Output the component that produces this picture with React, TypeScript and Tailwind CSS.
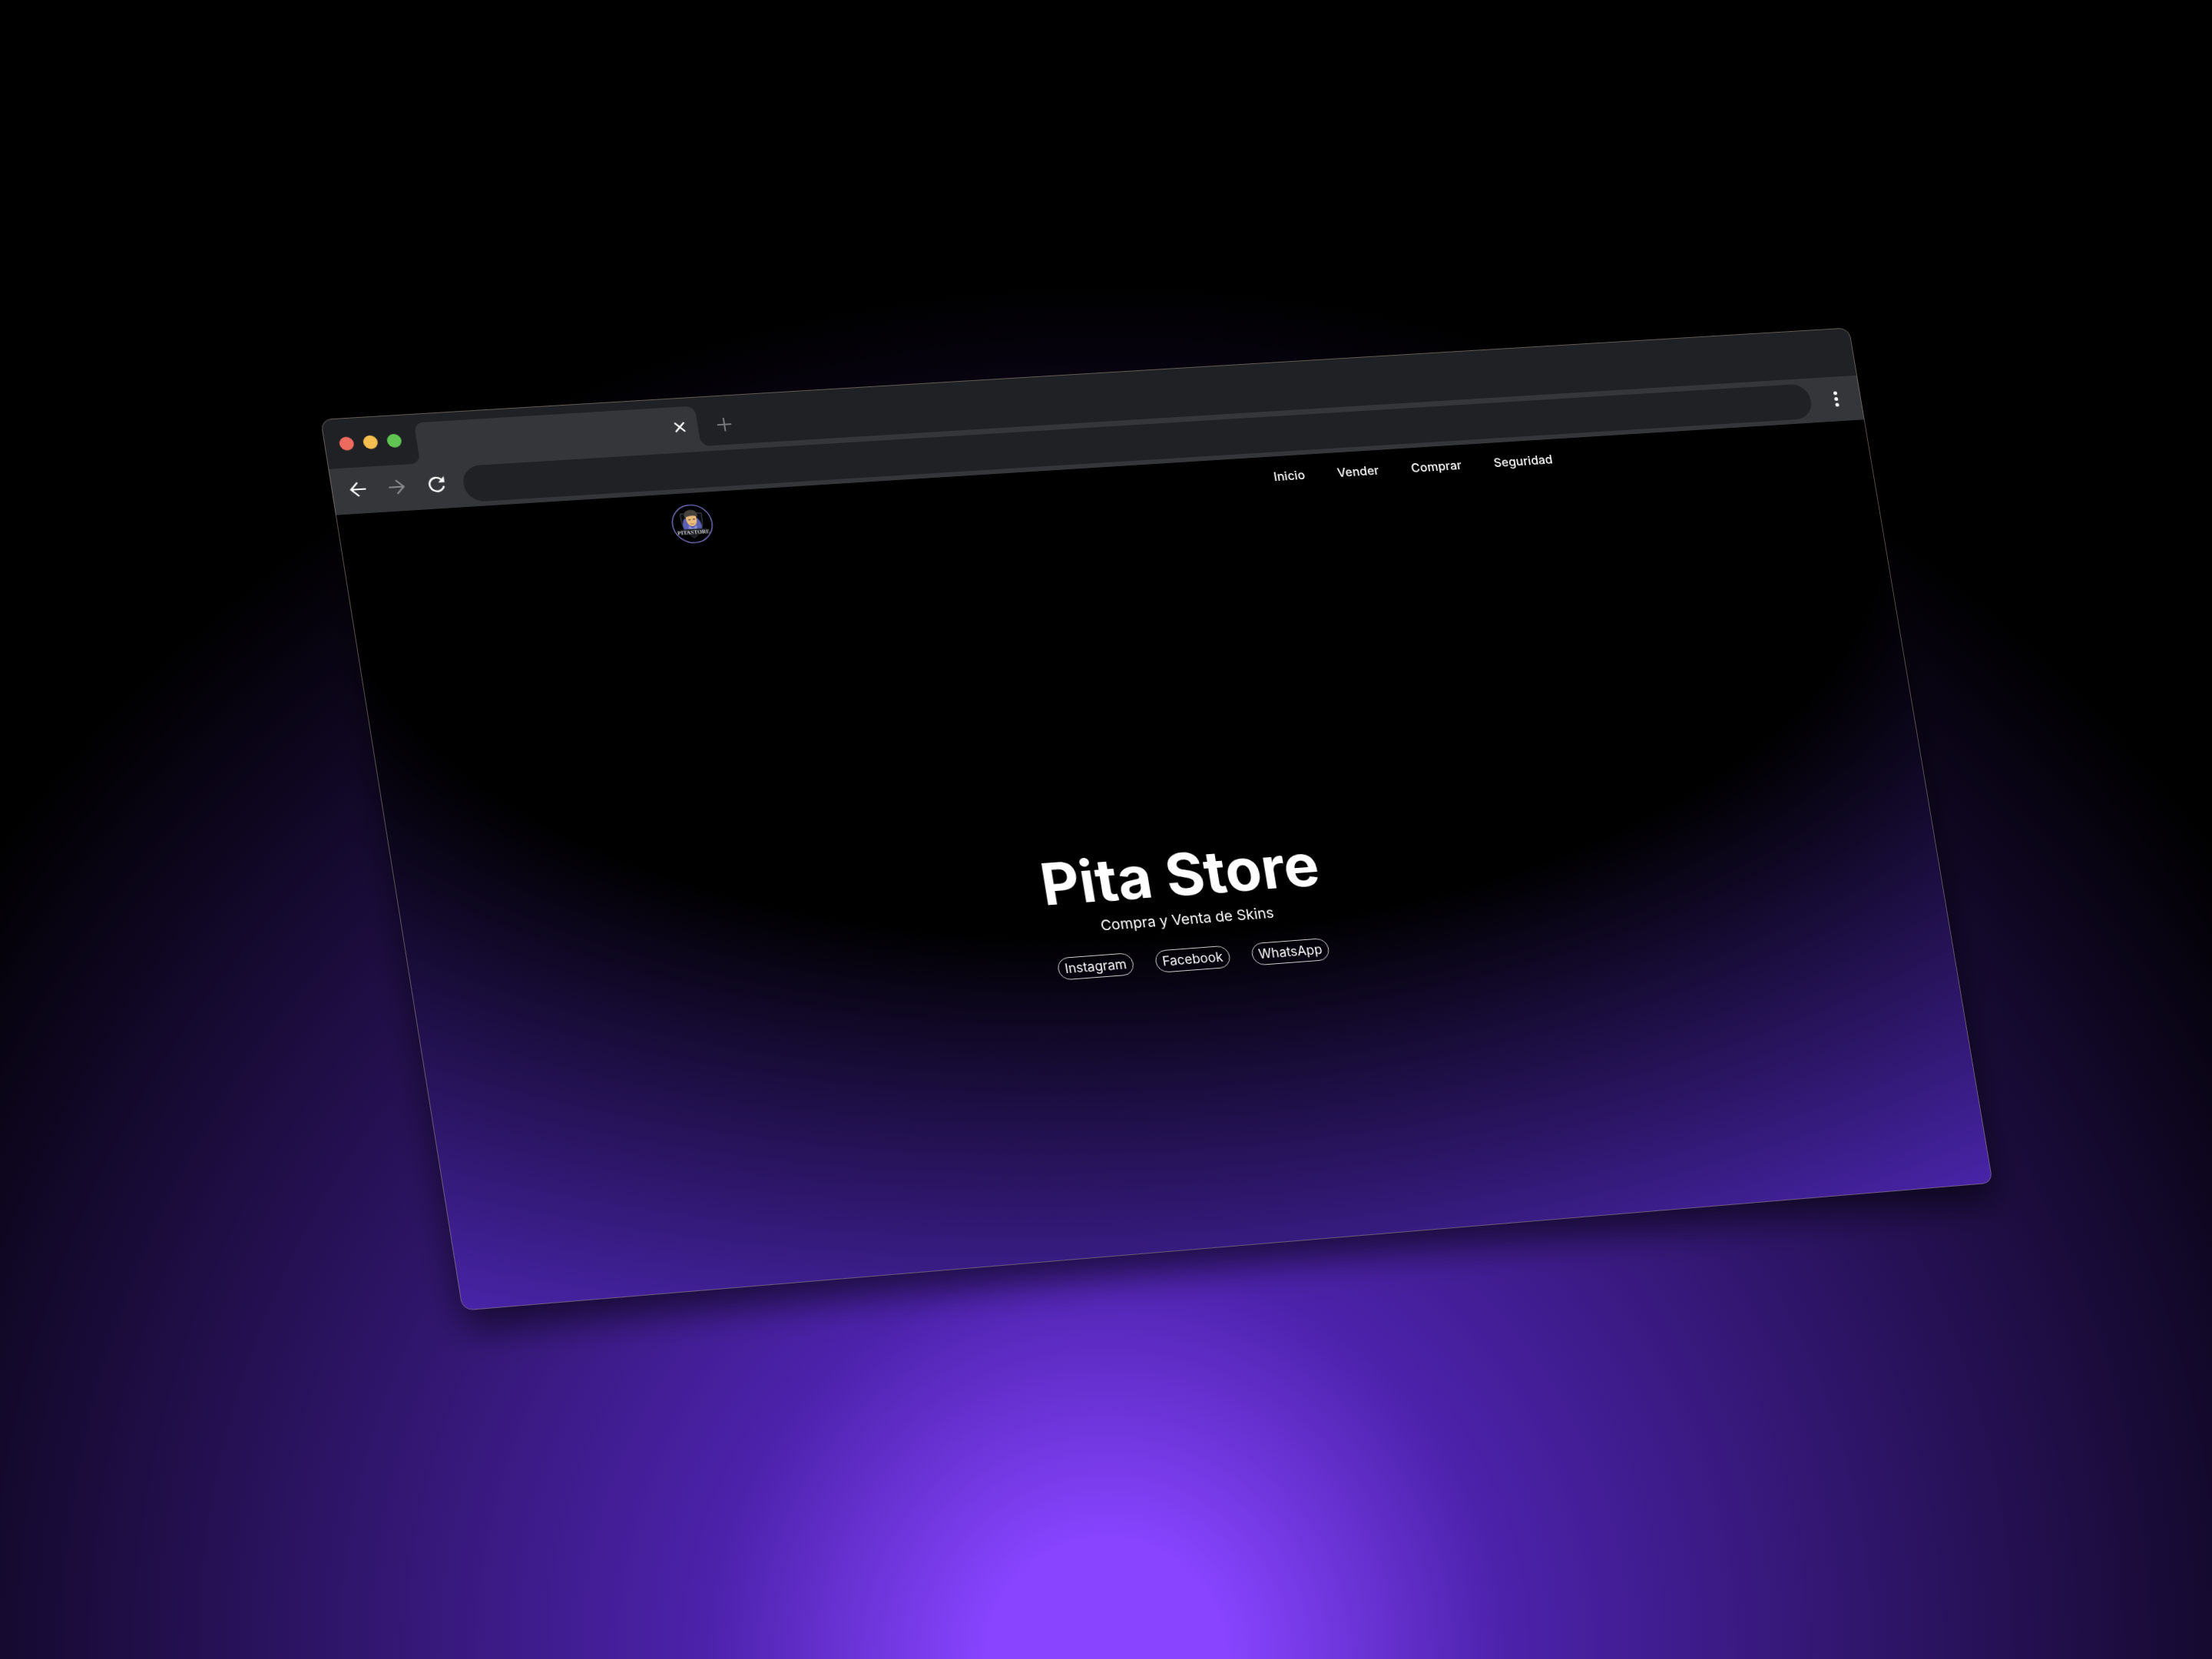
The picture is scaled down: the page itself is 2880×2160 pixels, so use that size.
import { useLayoutEffect, useRef, useState } from "react";
import type { CSSProperties, ReactNode } from "react";

type Point = [number, number];

/* Corners of the tilted window, as fractions of its untilted box. */
const CORNERS: Point[] = [
  [-0.0115, 0.0459],
  [0.9836, -0.0557],
  [1.0773, 0.8914],
  [0.081, 1.0329],
];

/* matrix3d that carries a w × h box onto a quadrilateral. */
function tilt(w: number, h: number): string {
  const [[x0, y0], [x1, y1], [x2, y2], [x3, y3]] = CORNERS.map(([x, y]) => [x * w, y * h]);
  const dx1 = x1 - x2;
  const dx2 = x3 - x2;
  const dy1 = y1 - y2;
  const dy2 = y3 - y2;
  const sx = x0 - x1 + x2 - x3;
  const sy = y0 - y1 + y2 - y3;
  const den = dx1 * dy2 - dx2 * dy1;
  const g = (sx * dy2 - dx2 * sy) / den;
  const k = (dx1 * sy - sx * dy1) / den;
  const a = (x1 - x0 + g * x1) / w;
  const b = (x3 - x0 + k * x3) / h;
  const d = (y1 - y0 + g * y1) / w;
  const e = (y3 - y0 + k * y3) / h;
  return `matrix3d(${[a, d, 0, g / w, b, e, 0, k / h, 0, 0, 1, 0, x0, y0, 0, 1].join(",")})`;
}

function Tilted({ children }: { children: ReactNode }) {
  const ref = useRef<HTMLDivElement>(null);
  const [style, setStyle] = useState<CSSProperties>({});
  useLayoutEffect(() => {
    const el = ref.current;
    if (!el) return;
    const update = () => setStyle({ transform: tilt(el.offsetWidth, el.offsetHeight) });
    update();
    const observer = new ResizeObserver(update);
    observer.observe(el);
    return () => observer.disconnect();
  }, []);
  return (
    <div
      ref={ref}
      style={style}
      className="relative flex aspect-[2000/1176] w-full origin-top-left flex-col overflow-hidden rounded-[14px] bg-black shadow-[0_24px_48px_rgba(0,0,0,0.6)]"
    >
      {children}
      <div className="pointer-events-none absolute inset-0 rounded-[14px] border border-[#8f8378]/60" />
    </div>
  );
}

function TabStrip() {
  return (
    <div className="flex h-[66px] items-end bg-[#202124]">
      <div className="flex h-full w-[116px] items-center gap-3 pt-[2px] pl-[19px]">
        <button aria-label="Close window" className="size-[18px] rounded-full bg-[#ed6a5e]" />
        <button aria-label="Minimize window" className="size-[18px] rounded-full bg-[#f5bf4f]" />
        <button aria-label="Zoom window" className="size-[18px] rounded-full bg-[#61c554]" />
      </div>
      <div className="relative flex h-[54px] w-[357px] items-center justify-end rounded-t-[12px] bg-[#35363a] pr-4">
        <svg viewBox="0 0 12 12" className="absolute bottom-0 -left-3 size-3" aria-hidden="true">
          <path d="M12 0v12H0A12 12 0 0 0 12 0Z" fill="#35363a" />
        </svg>
        <svg viewBox="0 0 12 12" className="absolute -right-3 bottom-0 size-3" aria-hidden="true">
          <path d="M0 0v12h12A12 12 0 0 1 0 0Z" fill="#35363a" />
        </svg>
        <button aria-label="Close tab">
          <svg viewBox="0 0 14 14" className="size-[14px]" fill="none" stroke="#fff" strokeWidth="2.2">
            <path d="M1 1l12 12M13 1L1 13" />
          </svg>
        </button>
      </div>
      <button aria-label="New tab" className="flex h-[54px] items-center pl-[25px]">
        <svg viewBox="0 0 18 18" className="size-[18px]" fill="none" stroke="#76777a" strokeWidth="2">
          <path d="M9 0v18M0 9h18" />
        </svg>
      </button>
    </div>
  );
}

function Toolbar() {
  return (
    <div className="flex h-[61px] items-center bg-[#35363a] pl-[23px]">
      <div className="flex w-[143px] items-center gap-[29px] pb-1">
        <button aria-label="Back">
          <svg viewBox="0 0 20 20" className="size-5" fill="none" stroke="#fff" strokeWidth="2.2">
            <path d="M20 10H1.6M10.4 .9L1.4 10l9 9.1" />
          </svg>
        </button>
        <button aria-label="Forward">
          <svg viewBox="0 0 20 20" className="size-5" fill="none" stroke="#86878a" strokeWidth="2.2">
            <path d="M0 10h18.4M9.6 .9l9 9.1-9 9.1" />
          </svg>
        </button>
        <button aria-label="Reload">
          <svg viewBox="0 0 22 22" className="size-[22px]" fill="none">
            <path d="M20 13.5A9 9 0 1 1 17.600 4.400" stroke="#fff" strokeWidth="2.4" />
            <path d="M21.500 .5v8h-8Z" fill="#fff" />
          </svg>
        </button>
      </div>
      <input aria-label="Address" className="h-12 min-w-0 flex-1 rounded-full bg-[#202124] px-6 text-[17px] text-white outline-none" />
      <button aria-label="Menu" className="flex w-[68px] flex-col items-center gap-[3px]">
        <span className="size-[5px] rounded-full bg-white" />
        <span className="size-[5px] rounded-full bg-white" />
        <span className="size-[5px] rounded-full bg-white" />
      </button>
    </div>
  );
}

function Logo() {
  return (
    <svg viewBox="0 0 50 50" className="size-[52px]" role="img" aria-label="Pita Store">
      <circle cx="25" cy="25" r="24.2" fill="#000" stroke="#7a73c4" strokeWidth="1.3" />
      <path d="M25 8l4 3 9 1c0 12 1 20-13 31C11 32 12 24 12 12l9-1Z" fill="#0c0d10" stroke="#34373f" strokeWidth="1.3" />
      <path d="M16 18c-3 4-3 9-2 14h22c1-6-1-11-4-14Z" fill="#5a5fb4" />
      <path d="M20 27l5 4 5-4v5H20Z" fill="#8f93d8" />
      <path d="M18 16c0-4 13-4 13 0 1 6-1 12-6 12s-7-6-7-12Z" fill="#ecbc7c" />
      <path d="M16.5 17c-1-7 3-10 8-10s9 3 8 9c-4-2-11-2-16 1Z" fill="#46423e" />
      <path d="M21 19.5h2.500M26.500 19h2.500" stroke="#4a3527" strokeWidth="1.2" />
      <path d="M23 25h4" stroke="#a8703f" strokeWidth="1" />
      <path d="M9 31.5h32v6.500l-11 1-5 4-5-4-11-1Z" fill="#1a1c20" />
      <text x="25" y="38" textAnchor="middle" fontSize="7" fontWeight="700" fill="#d3d5da" className="font-['Liberation_Sans_Narrow','Liberation_Serif',serif]">
        PITASTORE
      </text>
    </svg>
  );
}

const NAV = ["Inicio", "Vender", "Comprar", "Seguridad"];
const SOCIAL = ["Instagram", "Facebook", "WhatsApp"];

function Site() {
  return (
    <div className="flex flex-1 flex-col bg-[radial-gradient(125%_125%_at_50%_10%,#000_40%,#6633ee_100%)] px-[420px] text-white">
      <header className="flex items-start justify-between pt-[15px] pr-1.5">
        <a href="#inicio">
          <Logo />
        </a>
        <nav className="flex gap-[43px] text-base leading-6 font-medium">
          {NAV.map((item) => (
            <a key={item} href={`#${item.toLowerCase()}`}>
              {item}
            </a>
          ))}
        </nav>
      </header>
      <main className="flex flex-col items-center pt-[438px] pr-1.5">
        <h1 className="text-[77px] leading-[90px] font-bold">Pita Store</h1>
        <p className="pt-[2px] text-[19px] leading-7">Compra y Venta de Skins</p>
        <div className="flex gap-[29px] pt-6">
          {SOCIAL.map((name) => (
            <a key={name} href={`#${name.toLowerCase()}`} className="rounded-full border border-white/80 px-2 text-[17px] leading-7">
              {name}
            </a>
          ))}
        </div>
      </main>
    </div>
  );
}

export default function App() {
  return (
    <div className="flex min-h-screen items-center overflow-hidden bg-black bg-[radial-gradient(circle_farthest-corner_at_50%_100%,#8844ff_6%,#4c22ab_20%,#000_69%)] px-[440px] font-['Inter',sans-serif]">
      <Tilted>
        <TabStrip />
        <Toolbar />
        <Site />
      </Tilted>
    </div>
  );
}
